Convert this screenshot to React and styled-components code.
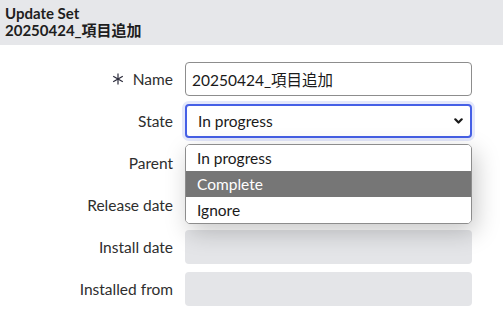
import React, { useState } from "react";
import styled, { createGlobalStyle } from "styled-components";

const Global = createGlobalStyle`
  html, body {
    margin: 0;
    padding: 0;
    background: #fff;
    font-family: Lato, "Noto Sans CJK JP", sans-serif;
    color: #2e2e2e;
  }
`;

const Header = styled.div`
  background: #e6e7ea;
  height: 45px;
  padding: 5px 5px 0;
  box-sizing: border-box;
  h1 {
    margin: 0;
    font-size: 15px;
    line-height: 17px;
    font-weight: 700;
    color: #1e1e1e;
  }
`;

const Form = styled.div`
  display: grid;
  grid-template-columns: 173px 1fr;
  column-gap: 12px;
  row-gap: 8px;
  padding: 17px 31px 0 0;
`;

const Label = styled.label`
  display: flex;
  align-items: center;
  justify-content: flex-end;
  gap: 9px;
  height: 34px;
  font-size: 15.5px;
  color: #2e2e2e;
`;

const Field = styled.div`
  position: relative;
  height: 34px;
`;

const Input = styled.div`
  box-sizing: border-box;
  height: 34px;
  display: flex;
  align-items: center;
  padding: 0 6px;
  font-size: 15.5px;
  color: #1a1a1a;
  border-radius: 4px;
  border: 1px solid ${(p) => (p.$disabled ? "transparent" : "#8d8d8d")};
  background: ${(p) => (p.$disabled ? "#e4e5e8" : "#fff")};
`;

const Select = styled.div`
  box-sizing: border-box;
  height: 34px;
  display: flex;
  align-items: center;
  justify-content: space-between;
  padding: 0 7px 0 11px;
  font-size: 15.5px;
  color: #1a1a1a;
  border: 2px solid #4660e6;
  border-radius: 4px;
  box-shadow: 0 0 0 3px #e4e8fb;
  background: #fff;
`;

const Menu = styled.ul`
  position: absolute;
  top: 40px;
  left: 0;
  right: 0;
  z-index: 5;
  margin: 0;
  padding: 0;
  list-style: none;
  background: #fff;
  border: 1px solid #8d8d8d;
  border-radius: 5px;
  overflow: hidden;
  box-shadow: 4px 8px 24px rgba(0, 0, 0, 0.22);
`;

const Option = styled.li`
  height: 26px;
  line-height: 26px;
  padding-left: 11px;
  font-size: 15.5px;
  color: ${(p) => (p.$active ? "#fff" : "#1a1a1a")};
  background: ${(p) => (p.$active ? "#767676" : "#fff")};
`;

const Star = () => (
  <svg width="12" height="12" viewBox="0 0 12 12" stroke="#2a2a3a" strokeWidth="1.2">
    <line x1="6" y1="0.5" x2="6" y2="11.5" />
    <line x1="1.2" y1="3.2" x2="10.8" y2="8.8" />
    <line x1="1.2" y1="8.8" x2="10.8" y2="3.2" />
  </svg>
);

const Chevron = () => (
  <svg width="9" height="6" viewBox="0 0 9 6" fill="none" stroke="#1a1a1a" strokeWidth="2.2" strokeLinecap="round" strokeLinejoin="round">
    <polyline points="1.3,1.3 4.5,4.5 7.7,1.3" />
  </svg>
);

const options = ["In progress", "Complete", "Ignore"];

export default function App() {
  const [active] = useState("Complete");
  return (
    <>
      <Global />
      <Header>
        <h1>Update Set</h1>
        <h1>20250424_項目追加</h1>
      </Header>
      <Form>
        <Label>
          <Star />
          Name
        </Label>
        <Field>
          <Input>20250424_項目追加</Input>
        </Field>

        <Label>State</Label>
        <Field>
          <Select>
            In progress
            <Chevron />
          </Select>
          <Menu>
            {options.map((o) => (
              <Option key={o} $active={o === active}>
                {o}
              </Option>
            ))}
          </Menu>
        </Field>

        <Label>Parent</Label>
        <Field>
          <Input />
        </Field>

        <Label>Release date</Label>
        <Field>
          <Input />
        </Field>

        <Label>Install date</Label>
        <Field>
          <Input $disabled />
        </Field>

        <Label>Installed from</Label>
        <Field>
          <Input $disabled />
        </Field>
      </Form>
    </>
  );
}
